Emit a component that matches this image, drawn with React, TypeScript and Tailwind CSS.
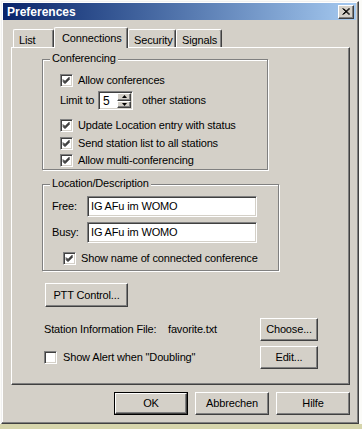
import React from "react";

const raised =
  "border border-t-white border-l-white border-r-[#404040] border-b-[#404040] shadow-[inset_-1px_-1px_0_#808080]";
const sunken =
  "border border-t-[#808080] border-l-[#808080] border-r-white border-b-white shadow-[inset_1px_1px_0_#404040,inset_-1px_-1px_0_#d4d0c8]";
const etched = "border border-[#808080] shadow-[inset_1px_1px_0_#fff,1px_1px_0_#fff]";

const Check = ({ checked }: { checked: boolean }) => (
  <div className={`w-[13px] h-[13px] shrink-0 bg-white ${sunken}`}>
    {checked && (
      <svg width="11" height="11" viewBox="0 0 11 11" className="block">
        <path d="M2 4.5 L4 6.5 L8.5 2 M2 5.5 L4 7.5 L8.5 3 M2 6.5 L4 8.5 L8.5 4" stroke="#000" strokeWidth="1" fill="none" />
      </svg>
    )}
  </div>
);

const CheckRow = ({ label, checked = true, className = "" }: { label: string; checked?: boolean; className?: string }) => (
  <div className={`flex items-center gap-[5px] h-[13px] leading-[13px] ${className}`}>
    <Check checked={checked} />
    <span>{label}</span>
  </div>
);

const Button = ({ label, className = "", isDefault = false }: { label: string; className?: string; isDefault?: boolean }) =>
  isDefault ? (
    <div className={`border border-black ${className}`}>
      <div className={`w-full h-full flex items-center justify-center ${raised}`}>{label}</div>
    </div>
  ) : (
    <div className={`flex items-center justify-center ${raised} ${className}`}>{label}</div>
  );

const Group = ({ title, className, children }: { title: string; className: string; children: React.ReactNode }) => (
  <div className={`relative ${etched} ${className}`}>
    <span className="absolute left-[7px] -top-[8px] px-[2px] bg-[#d4d0c8] leading-[13px]">{title}</span>
    {children}
  </div>
);

const TextBox = ({ value }: { value: string }) => (
  <div className={`w-[170px] h-[21px] bg-white flex items-center pl-[3px] ${sunken}`}>{value}</div>
);

export default function App() {
  const tabs = ["List", "Connections", "Security", "Signals"];
  const widths = ["w-[41px]", "w-[74px]", "w-[48px]", "w-[46px]"];
  return (
    <div className="w-[362px] h-[429px] overflow-hidden flex flex-col bg-[#fbfbf8] font-['Liberation_Sans',Arial,sans-serif] text-[11px] tracking-[-0.15px] text-black">
      <div className="ml-[1px] mt-[1px] w-[358px] h-[423px] shrink-0 p-[1px] bg-[#d4d0c8] border border-t-[#f0f0f0] border-l-[#f0f0f0] border-r-[#404040] border-b-[#404040] shadow-[inset_-1px_-1px_0_#808080,inset_1px_1px_0_#fff] flex flex-col">
        {/* title bar */}
        <div className="h-[17px] w-[353px] flex items-center justify-between bg-gradient-to-r from-[#0a246a] to-[#a6caf0]">
          <span className="pl-[4px] font-bold text-[12px] tracking-normal text-white leading-none">Preferences</span>
          <div className={`mr-[2px] w-[16px] h-[14px] bg-[#d4d0c8] flex items-center justify-center ${raised}`}>
            <svg width="8" height="7" viewBox="0 0 8 7">
              <path d="M0.5 0.5 L7 6.5 M1.5 0.5 L8 6.5 M7 0.5 L0.5 6.5 M8 0.5 L1.5 6.5" stroke="#000" strokeWidth="1" />
            </svg>
          </div>
        </div>

        {/* tabs */}
        <div className="mt-[7px] ml-[10px] flex items-end h-[20px]">
          {tabs.map((t, i) =>
            i === 1 ? (
              <div
                key={t}
                className={`${widths[i]} h-[21px] -mb-[1px] relative z-10 bg-[#d4d0c8] border-t border-l border-r border-t-white border-l-white border-r-[#404040] rounded-t-[2px] shadow-[inset_-1px_0_0_#808080] pl-[7px] pt-[2px]`}
              >
                {t}
              </div>
            ) : (
              <div
                key={t}
                className={`${widths[i]} h-[18px] border-t border-l border-r border-t-white border-l-white border-r-[#404040] rounded-t-[2px] shadow-[inset_-1px_0_0_#808080] pl-[5px] pt-[2px]`}
              >
                {t}
              </div>
            )
          )}
        </div>

        {/* tab panel */}
        <div className={`ml-[8px] w-[339px] h-[338px] flex flex-col ${raised}`}>
          <Group title="Conferencing" className="mt-[11px] ml-[30px] w-[226px] h-[111px] shrink-0">
            <div className="pl-[17px] flex flex-col">
              <CheckRow label="Allow conferences" className="mt-[14px]" />
              <div className="mt-[4px] flex items-center h-[19px]">
                <span className="w-[38px]">Limit to</span>
                <div className={`w-[35px] h-[19px] bg-white flex items-center ${sunken}`}>
                  <span className="pl-[4px] flex-1 text-[12px]">5</span>
                  <div className="w-[15px] h-full flex flex-col pr-[1px] py-[1px]">
                    <div className={`flex-1 bg-[#d4d0c8] flex items-center justify-center ${raised}`}>
                      <svg width="5" height="3" viewBox="0 0 5 3"><path d="M2.5 0 L5 3 L0 3 Z" fill="#000" /></svg>
                    </div>
                    <div className={`flex-1 bg-[#d4d0c8] flex items-center justify-center ${raised}`}>
                      <svg width="5" height="3" viewBox="0 0 5 3"><path d="M0 0 L5 0 L2.5 3 Z" fill="#000" /></svg>
                    </div>
                  </div>
                </div>
                <span className="ml-[9px]">other stations</span>
              </div>
              <CheckRow label="Update Location entry with status" className="mt-[9px]" />
              <CheckRow label="Send station list to all stations" className="mt-[5px]" />
              <CheckRow label="Allow multi-conferencing" className="mt-[4px]" />
            </div>
          </Group>

          <Group title="Location/Description" className="mt-[14px] ml-[30px] w-[237px] h-[87px] shrink-0">
            <div className="flex flex-col">
              <div className="mt-[11px] pl-[9px] flex items-center">
                <span className="w-[35px]">Free:</span>
                <TextBox value="IG AFu im WOMO" />
              </div>
              <div className="mt-[5px] pl-[9px] flex items-center">
                <span className="w-[35px]">Busy:</span>
                <TextBox value="IG AFu im WOMO" />
              </div>
              <CheckRow label="Show name of connected conference" className="mt-[9px] pl-[20px]" />
            </div>
          </Group>

          <Button label="PTT Control..." className="mt-[12px] ml-[33px] w-[83px] h-[24px] shrink-0" />

          <div className="mt-[11px] ml-[32px] w-[274px] h-[23px] flex items-center">
            <span className="w-[124px]">Station Information File:</span>
            <span className="flex-1">favorite.txt</span>
            <Button label="Choose..." className="w-[58px] h-[23px]" />
          </div>
          <div className="mt-[5px] ml-[32px] w-[274px] h-[23px] flex items-center">
            <CheckRow label={'Show Alert when "Doubling"'} checked={false} className="flex-1 gap-[6px]" />
            <Button label="Edit..." className="w-[58px] h-[23px]" />
          </div>
        </div>

        {/* dialog buttons */}
        <div className="mt-[7px] ml-[111px] flex gap-[7px]">
          <Button label="OK" isDefault className="w-[74px] h-[23px]" />
          <Button label="Abbrechen" className="w-[74px] h-[23px]" />
          <Button label="Hilfe" className="w-[74px] h-[23px]" />
        </div>
      </div>
      <div className="flex-1 bg-[#d6d5ac]" />
    </div>
  );
}
